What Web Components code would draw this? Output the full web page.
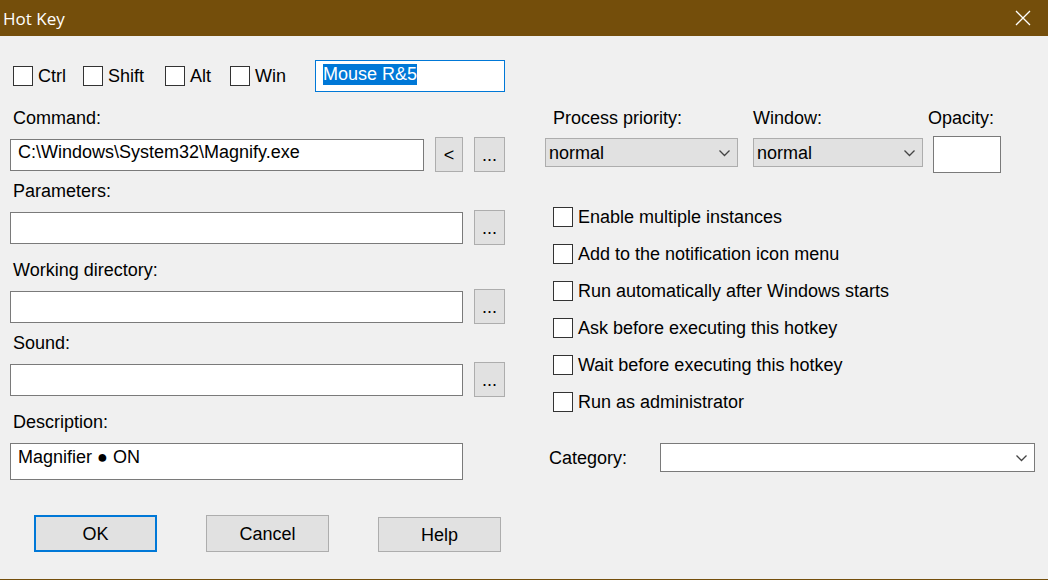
<!DOCTYPE html>
<html lang="en">
<head>
<meta charset="utf-8">
<meta name="viewport" content="width=device-width, initial-scale=1">
<title>Hot Key</title>
<style>
  body {
    margin: 0;
    background: #f0f0f0;
    color: #000;
    font: 18px/20px "Liberation Sans", Arial, sans-serif;
    --brand: #744e0b;
    --accent: #0078d7;
    --face: #e1e1e1;
    --edge: #adadad;
    --line: #7a7a7a;
  }
</style>
</head>
<body>
<hotkey-dialog></hotkey-dialog>

<template id="dialog">
  <style>
    :host { display: flex; flex-direction: column; min-height: 100vh; box-sizing: border-box; border-bottom: 1px solid var(--brand); }
    form { display: grid; grid-template-columns: minmax(0, 99fr) minmax(0, 98fr); column-gap: 40px; padding: 24px 13px 27px 10px; }
    .keys { display: grid; grid-template-columns: 70px 82px 65px minmax(85px, 1fr) 190px; align-items: center; padding-left: 3px; margin-bottom: 16px; }
    .fields { display: grid; row-gap: 9px; }
    .fields .apart { margin-top: 6px; }
    .actions { display: flex; align-items: flex-end; gap: 49px; padding-left: 24px; margin-top: 35px; }
    .actions hk-button { width: 123px; height: 37px; }
    .actions .help { height: 35px; }
    .modes { display: grid; grid-template-columns: 208fr 175fr 107px; margin-top: 48px; }
    .modes .priority { margin-right: 15px; --indent: 8px; }
    .modes .state { margin-right: 5px; }
    .options { display: grid; gap: 17px; justify-items: start; padding: 34px 0 31px 8px; }
  </style>
  <hk-titlebar>Hot Key</hk-titlebar>
  <form>
    <div>
      <div class="keys">
        <hk-check>Ctrl</hk-check>
        <hk-check>Shift</hk-check>
        <hk-check>Alt</hk-check>
        <hk-check>Win</hk-check>
        <hk-key value="Mouse R&amp;5"></hk-key>
      </div>
      <div class="fields">
        <hk-field label="Command:" value="C:\Windows\System32\Magnify.exe">
          <hk-button class="recent">&lt;</hk-button>
          <hk-button>...</hk-button>
        </hk-field>
        <hk-field label="Parameters:"><hk-button>...</hk-button></hk-field>
        <hk-field class="apart" label="Working directory:"><hk-button>...</hk-button></hk-field>
        <hk-field label="Sound:"><hk-button>...</hk-button></hk-field>
        <hk-field class="apart" label="Description:" value="Magnifier ● ON" tall></hk-field>
      </div>
      <div class="actions">
        <hk-button default>OK</hk-button>
        <hk-button>Cancel</hk-button>
        <hk-button class="help">Help</hk-button>
      </div>
    </div>
    <div>
      <div class="modes">
        <hk-select class="priority" label="Process priority:" options="normal,idle,high,realtime"></hk-select>
        <hk-select class="state" label="Window:" options="normal,maximized,minimized"></hk-select>
        <hk-opacity></hk-opacity>
      </div>
      <div class="options">
        <hk-check>Enable multiple instances</hk-check>
        <hk-check>Add to the notification icon menu</hk-check>
        <hk-check>Run automatically after Windows starts</hk-check>
        <hk-check>Ask before executing this hotkey</hk-check>
        <hk-check>Wait before executing this hotkey</hk-check>
        <hk-check>Run as administrator</hk-check>
      </div>
      <hk-select inline label="Category:" options=""></hk-select>
    </div>
  </form>
</template>

<template id="titlebar">
  <style>
    :host { display: flex; align-items: center; justify-content: space-between; height: 36px; padding-left: 3px; background: var(--brand); color: #fff; }
    h1 { margin: 0; padding-top: 2px; font: 400 17px/34px "Open Sans", "Noto Sans", sans-serif; }
    button { width: 50px; height: 36px; padding: 0; border: 0; background: none; color: inherit; display: grid; place-items: center; }
    svg { display: block; }
  </style>
  <h1><slot></slot></h1>
  <button type="button" aria-label="Close">
    <svg width="16" height="16" viewBox="0 0 16 16" fill="none" stroke="currentColor" stroke-width="1.3"><path d="M1 1l14 14M15 1L1 15"/></svg>
  </button>
</template>

<template id="check">
  <style>
    :host { display: block; }
    label { display: flex; width: max-content; align-items: center; gap: 5px; white-space: nowrap; }
    input { appearance: none; flex: none; box-sizing: border-box; width: 20px; height: 20px; margin: 0; border: 1px solid #333; background: #fff; }
    input:checked { background: #333; box-shadow: inset 0 0 0 4px #fff; }
  </style>
  <label><input type="checkbox"><slot></slot></label>
</template>

<template id="button">
  <style>
    :host { display: block; width: 31px; height: 35px; flex: none; }
    :host(.recent) { width: 28px; }
    button { box-sizing: border-box; width: 100%; height: 100%; padding: 0; border: 1px solid var(--edge); border-radius: 0; background: var(--face); color: inherit; font: inherit; }
    :host([default]) button { border: 2px solid var(--accent); }
  </style>
  <button type="button"><slot></slot></button>
</template>

<template id="key">
  <style>
    :host { display: block; }
    input { display: block; box-sizing: border-box; width: 100%; height: 32px; padding: 3px 7px 6px; border: 1px solid var(--line); outline: 0; background: #fff; color: inherit; font: inherit; line-height: 21px; }
    input:focus { border-color: var(--accent); }
    input::selection { background: #0078d7; color: #fff; }
  </style>
  <input type="text" aria-label="Key">
</template>

<template id="field">
  <style>
    :host { display: block; }
    label { display: block; padding-left: 3px; margin-bottom: 9px; }
    .row { display: flex; gap: 11px; align-items: flex-start; }
    input { flex: 1; min-width: 0; box-sizing: border-box; height: 32px; margin: 2px 0 0; padding: 2px 7px 7px; border: 1px solid var(--line); border-radius: 0; background: #fff; color: inherit; font: inherit; line-height: 21px; }
    :host([tall]) input { height: 37px; padding-top: 3px; padding-bottom: 11px; }
    :host([tall]) .row { padding-right: 42px; }
  </style>
  <label for="box"></label>
  <div class="row"><input id="box" type="text"><slot></slot></div>
</template>

<template id="opacity">
  <style>
    :host { display: block; }
    label { display: block; margin-bottom: 8px; }
    input { display: block; box-sizing: border-box; width: 68px; height: 37px; margin: 0 0 0 5px; padding: 2px 7px; border: 1px solid var(--line); border-radius: 0; background: #fff; color: inherit; font: inherit; }
  </style>
  <label for="box">Opacity:</label>
  <input id="box" type="text" inputmode="numeric">
</template>

<template id="select">
  <style>
    :host { display: block; }
    label { display: block; padding-left: var(--indent, 0); margin-bottom: 10px; }
    .box { display: grid; align-items: center; }
    select, svg { grid-area: 1 / 1; }
    select { appearance: none; box-sizing: border-box; width: 100%; height: 29px; margin: 0; padding: 0 28px 0 3px; border: 1px solid var(--edge); border-radius: 0; background: var(--face); color: inherit; font: inherit; }
    svg { justify-self: end; margin-right: 7px; pointer-events: none; }
    :host([inline]) { display: grid; grid-template-columns: 111px minmax(0, 1fr); align-items: center; padding-left: 4px; }
    :host([inline]) label { margin: 0; }
    :host([inline]) select { border-color: var(--line); background: #fff; }
  </style>
  <label for="list"></label>
  <div class="box">
    <select id="list"></select>
    <svg width="13" height="8" viewBox="0 0 13 8" fill="none" stroke="#444" stroke-width="1.3"><path d="M1.5 1.5l5 5 5-5"/></svg>
  </div>
</template>

<script>
  class Part extends HTMLElement {
    constructor() {
      super();
      const template = document.getElementById(this.constructor.template);
      this.attachShadow({ mode: "open" }).append(template.content.cloneNode(true));
    }
    part$(selector) { return this.shadowRoot.querySelector(selector); }
  }

  class Titlebar extends Part { static template = "titlebar"; }
  class Check extends Part { static template = "check"; }
  class Button extends Part { static template = "button"; }
  class Opacity extends Part { static template = "opacity"; }

  class Key extends Part {
    static template = "key";
    connectedCallback() { this.part$("input").value = this.getAttribute("value") || ""; }
    edit() {
      const input = this.part$("input");
      input.focus();
      input.select();
    }
  }

  class Field extends Part {
    static template = "field";
    connectedCallback() {
      this.part$("label").textContent = this.getAttribute("label");
      this.part$("input").value = this.getAttribute("value") || "";
    }
  }

  class Select extends Part {
    static template = "select";
    connectedCallback() {
      this.part$("label").textContent = this.getAttribute("label");
      const names = this.getAttribute("options").split(",");
      this.part$("select").replaceChildren(...names.map(name => new Option(name)));
    }
  }

  class Dialog extends Part {
    static template = "dialog";
    connectedCallback() { this.part$("hk-key").edit(); }
  }

  customElements.define("hk-titlebar", Titlebar);
  customElements.define("hk-check", Check);
  customElements.define("hk-button", Button);
  customElements.define("hk-key", Key);
  customElements.define("hk-field", Field);
  customElements.define("hk-opacity", Opacity);
  customElements.define("hk-select", Select);
  customElements.define("hotkey-dialog", Dialog);
</script>
</body>
</html>
